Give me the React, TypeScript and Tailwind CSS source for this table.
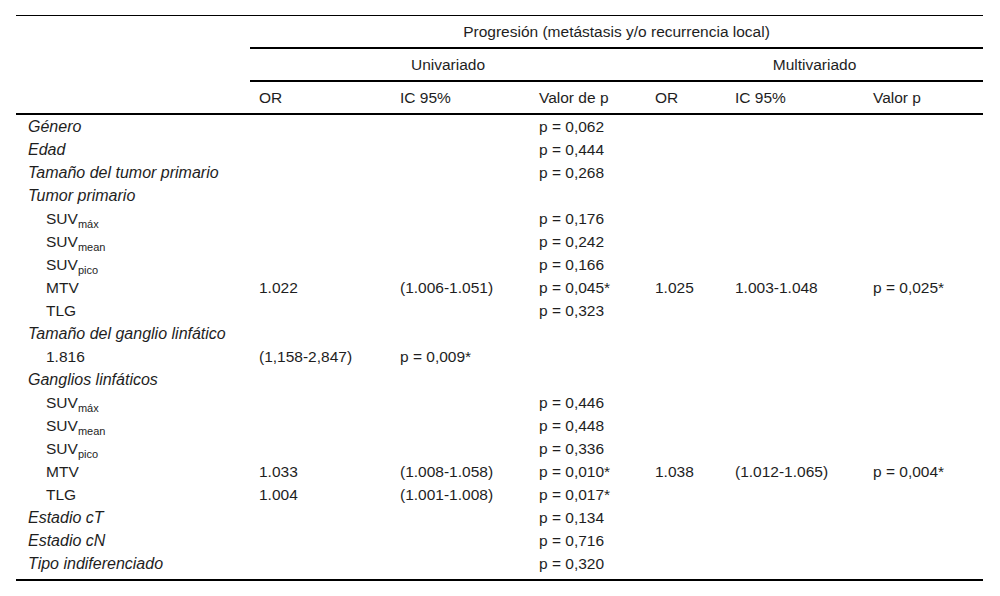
import React from "react";

type Row = {
  label: React.ReactNode;
  kind: "group" | "item";
  cells: string[];
};

function Suv({ sub }: { sub: string }) {
  return (
    <>
      SUV
      <sub className="text-[11px] relative top-[4px]">{sub}</sub>
    </>
  );
}

const rows: Row[] = [
  { label: "Género", kind: "group", cells: ["", "", "p = 0,062", "", "", ""] },
  { label: "Edad", kind: "group", cells: ["", "", "p = 0,444", "", "", ""] },
  { label: "Tamaño del tumor primario", kind: "group", cells: ["", "", "p = 0,268", "", "", ""] },
  { label: "Tumor primario", kind: "group", cells: ["", "", "", "", "", ""] },
  { label: <Suv sub="máx" />, kind: "item", cells: ["", "", "p = 0,176", "", "", ""] },
  { label: <Suv sub="mean" />, kind: "item", cells: ["", "", "p = 0,242", "", "", ""] },
  { label: <Suv sub="pico" />, kind: "item", cells: ["", "", "p = 0,166", "", "", ""] },
  {
    label: "MTV",
    kind: "item",
    cells: ["1.022", "(1.006-1.051)", "p = 0,045*", "1.025", "1.003-1.048", "p = 0,025*"],
  },
  { label: "TLG", kind: "item", cells: ["", "", "p = 0,323", "", "", ""] },
  { label: "Tamaño del ganglio linfático", kind: "group", cells: ["", "", "", "", "", ""] },
  { label: "1.816", kind: "item", cells: ["(1,158-2,847)", "p = 0,009*", "", "", "", ""] },
  { label: "Ganglios linfáticos", kind: "group", cells: ["", "", "", "", "", ""] },
  { label: <Suv sub="máx" />, kind: "item", cells: ["", "", "p = 0,446", "", "", ""] },
  { label: <Suv sub="mean" />, kind: "item", cells: ["", "", "p = 0,448", "", "", ""] },
  { label: <Suv sub="pico" />, kind: "item", cells: ["", "", "p = 0,336", "", "", ""] },
  {
    label: "MTV",
    kind: "item",
    cells: ["1.033", "(1.008-1.058)", "p = 0,010*", "1.038", "(1.012-1.065)", "p = 0,004*"],
  },
  { label: "TLG", kind: "item", cells: ["1.004", "(1.001-1.008)", "p = 0,017*", "", "", ""] },
  { label: "Estadio cT", kind: "group", cells: ["", "", "p = 0,134", "", "", ""] },
  { label: "Estadio cN", kind: "group", cells: ["", "", "p = 0,716", "", "", ""] },
  { label: "Tipo indiferenciado", kind: "group", cells: ["", "", "p = 0,320", "", "", ""] },
];

const colWidths = ["w-[234px]", "w-[141px]", "w-[139px]", "w-[116px]", "w-[80px]", "w-[138px]", "w-[119px]"];

export default function App() {
  return (
    <div className="w-[1000px] h-[596px] bg-white pt-[15px] pl-4 font-['Liberation_Sans',Arial,sans-serif] text-[15.5px] text-[#1e1e1e]">
      <table className="w-[967px] table-fixed border-collapse border-t border-black">
        <colgroup>
          {colWidths.map((w, i) => (
            <col key={i} className={w} />
          ))}
        </colgroup>
        <thead>
          <tr>
            <th rowSpan={3} className="border-b-2 border-black font-normal" />
            <th colSpan={6} className="border-b-2 border-black font-normal text-center leading-[23px] py-1">
              Progresión (metástasis y/o recurrencia local)
            </th>
          </tr>
          <tr>
            <th colSpan={3} className="border-b-2 border-black font-normal text-center leading-[23px] py-1">
              Univariado
            </th>
            <th colSpan={3} className="border-b-2 border-black font-normal text-center leading-[23px] py-1">
              Multivariado
            </th>
          </tr>
          <tr>
            {["OR", "IC 95%", "Valor de p", "OR", "IC 95%", "Valor p"].map((h, i) => (
              <th key={i} className="border-b-2 border-black font-normal text-left leading-[23px] py-1 pl-[9px]">
                {h}
              </th>
            ))}
          </tr>
        </thead>
        <tbody className="border-b-2 border-black">
          {rows.map((r, i) => (
            <tr key={i}>
              <td
                className={`leading-[23px] whitespace-nowrap ${
                  r.kind === "group" ? "italic text-[16px] pl-3" : "pl-[30px]"
                } ${i === rows.length - 1 ? "pb-1" : ""}`}
              >
                {r.label}
              </td>
              {r.cells.map((c, j) => (
                <td
                  key={j}
                  className={`leading-[23px] pl-[9px] whitespace-nowrap ${i === rows.length - 1 ? "pb-1" : ""}`}
                >
                  {c}
                </td>
              ))}
            </tr>
          ))}
        </tbody>
      </table>
    </div>
  );
}
